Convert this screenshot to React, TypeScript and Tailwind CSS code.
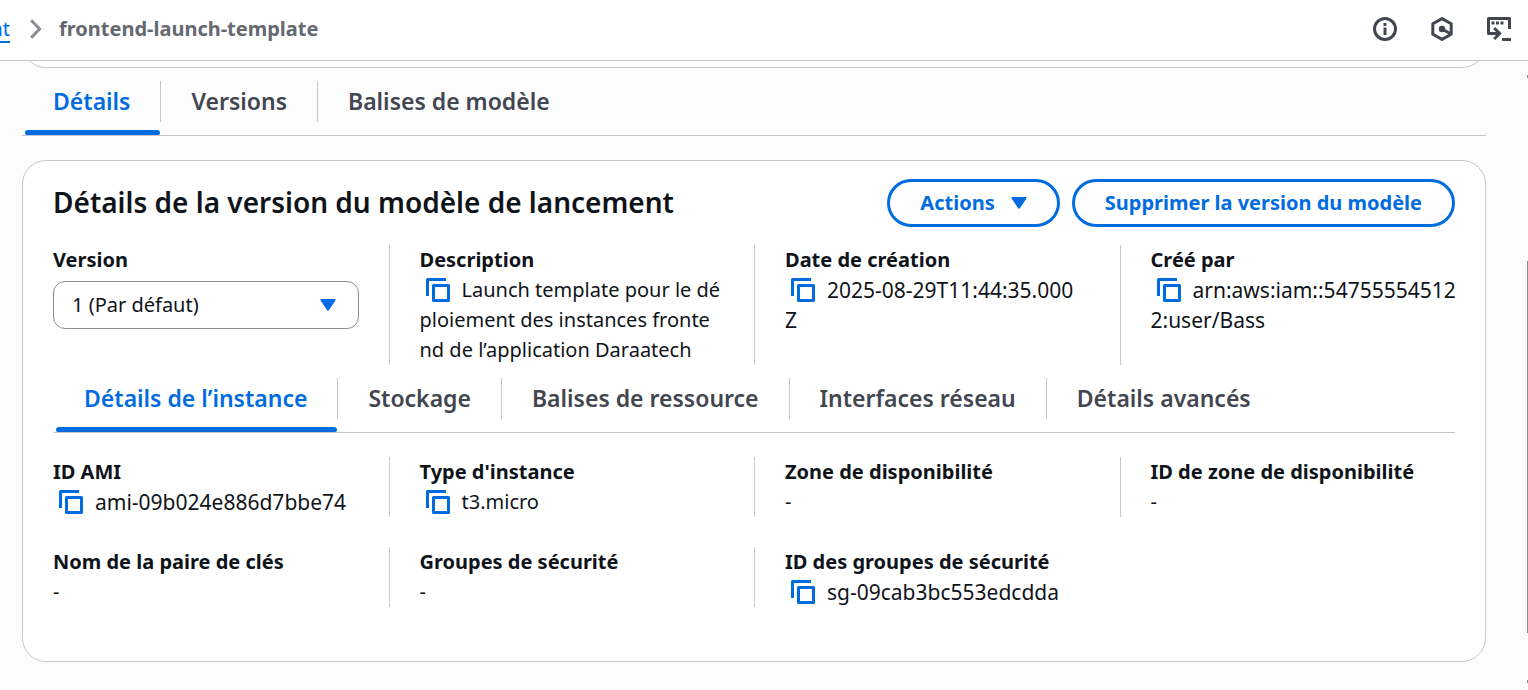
import React, { useState } from "react";

type Field = {
  label: string;
  lines?: string[];
  copy?: boolean;
  code?: boolean;
};

function InfoIcon() {
  return (
    <svg width="24" height="24" viewBox="0 0 24 24" fill="none" stroke="currentColor" strokeWidth="3" aria-hidden="true">
      <circle cx="12" cy="12" r="10.5" />
      <path d="M12 10.5V18" />
      <path d="M12 6v3" />
    </svg>
  );
}

function HexagonIcon() {
  return (
    <svg width="24" height="24" viewBox="0 0 24 24" fill="none" stroke="currentColor" strokeWidth="3" strokeLinejoin="round" aria-hidden="true">
      <path d="M12 1.6 21.2 6.8V17.2L12 22.4 2.8 17.2V6.8Z" />
      <circle cx="12" cy="12" r="3.2" fill="currentColor" stroke="none" />
      <path d="M12 12 21 17" />
    </svg>
  );
}

function ShellIcon() {
  return (
    <svg width="24" height="24" viewBox="0 0 24 24" fill="none" stroke="currentColor" strokeWidth="3" aria-hidden="true">
      <path d="M22.5 12V1.5H1.5V16.5H13" strokeLinejoin="round" />
      <path d="M7.2 11 12.6 16.5 7.2 22" />
      <path d="M15 22.5H24" />
      <path d="M4.5 6H7.5M9 6H12M13.5 6H16.5" />
    </svg>
  );
}

function CopyIcon() {
  return (
    <svg width="24" height="24" viewBox="0 0 24 24" fill="none" stroke="currentColor" strokeWidth="3" strokeLinejoin="round" aria-hidden="true">
      <path d="M1.5 18V1.5H20" />
      <rect x="7.5" y="7.5" width="15" height="15" />
    </svg>
  );
}

function Caret() {
  return (
    <svg width="16" height="12" viewBox="0 0 16 12" fill="currentColor" stroke="currentColor" strokeWidth="2" strokeLinejoin="round" aria-hidden="true">
      <path d="M1.4 1H14.6L8 10.8Z" />
    </svg>
  );
}

function Tabs({ items, label }: { items: string[]; label: string }) {
  const [active, setActive] = useState(0);
  return (
    <div role="tablist" aria-label={label} className="flex border-b border-[#c6c6cd] pl-px">
      {items.map((item, i) => (
        <button
          key={item}
          type="button"
          role="tab"
          aria-selected={i === active}
          onClick={() => setActive(i)}
          className={`relative h-[67px] whitespace-nowrap pr-[31px] pb-[2px] pl-[30px] text-[23px] leading-[30px] font-semibold ${
            i === active ? "text-[#006ce0]" : "text-[#424650]"
          }`}
        >
          {item}
          {i < items.length - 1 && <span className="absolute top-[13px] right-0 h-[41px] w-px bg-[#c6c6cd]" />}
          {i === active && <span className="absolute right-px bottom-0 left-[2px] h-[5px] rounded-t-[3px] rounded-b-[2px] bg-[#006ce0]" />}
        </button>
      ))}
    </div>
  );
}

function Cell({ label, lines = ["-"], copy, code }: Field) {
  return (
    <div className="border-l border-[#c6c6cd] px-[30px] nth-[4n+1]:border-l-0">
      <dt className="font-bold">{label}</dt>
      <dd className={`whitespace-nowrap ${code ? "text-[21px]" : "text-[20px]"}`}>
        {lines.map((line, i) => (
          <span key={line} className="flex h-[30px] items-center">
            {copy && i === 0 && (
              <button type="button" aria-label="Copier" className="mr-3 ml-[6px] text-[#006ce0]">
                <CopyIcon />
              </button>
            )}
            {line}
          </span>
        ))}
      </dd>
    </div>
  );
}

const summary: Field[] = [
  {
    label: "Description",
    lines: ["Launch template pour le dé", "ploiement des instances fronte", "nd de l’application Daraatech"],
    copy: true,
  },
  { label: "Date de création", lines: ["2025-08-29T11:44:35.000", "Z"], copy: true, code: true },
  { label: "Créé par", lines: ["arn:aws:iam::54755554512", "2:user/Bass"], copy: true, code: true },
];

const instance: Field[] = [
  { label: "ID AMI", lines: ["ami-09b024e886d7bbe74"], copy: true, code: true },
  { label: "Type d'instance", lines: ["t3.micro"], copy: true },
  { label: "Zone de disponibilité" },
  { label: "ID de zone de disponibilité" },
  { label: "Nom de la paire de clés" },
  { label: "Groupes de sécurité" },
  { label: "ID des groupes de sécurité", lines: ["sg-09cab3bc553edcdda"], copy: true, code: true },
];

const buttonClass =
  "flex h-12 items-center gap-4 rounded-full border-3 border-[#006ce0] px-[30px] font-bold whitespace-nowrap text-[#006ce0]";

export default function App() {
  return (
    <div className="flex min-h-screen flex-col bg-[#fcfcfd] font-['Noto_Sans',sans-serif] text-[20px] leading-[30px] text-[#0f141a]">
      <header className="flex h-[61px] items-center justify-between border-b border-[#c6c6cd] bg-white pr-[17px] pb-[2px]">
        <nav aria-label="Fil d'Ariane" className="flex items-center">
          <span className="flex w-[10px] justify-end overflow-hidden">
            <a href="#" className="text-[#006ce0] underline decoration-2 underline-offset-[5px]">nt</a>
          </span>
          <svg width="12" height="20" viewBox="0 0 12 20" fill="none" stroke="#8c8c94" strokeWidth="3" className="mr-[17px] ml-5" aria-hidden="true">
            <path d="M1.2 1.2 9.6 10 1.2 18.8" />
          </svg>
          <span aria-current="page" className="font-bold text-[#656871]">frontend-launch-template</span>
        </nav>
        <div className="flex items-center gap-[33px] text-[#424650]">
          <button type="button" aria-label="Informations"><InfoIcon /></button>
          <button type="button" aria-label="Amazon Q"><HexagonIcon /></button>
          <button type="button" aria-label="CloudShell"><ShellIcon /></button>
        </div>
      </header>

      <div className="flex flex-1">
        <main className="min-w-0 flex-1 pr-[41px] pl-[22px]">
          <div className="flex h-[7px] flex-col justify-end overflow-hidden">
            <div className="h-12 shrink-0 rounded-b-3xl border border-[#c6c6cd] bg-white" />
          </div>
          <Tabs label="Modèle de lancement" items={["Détails", "Versions", "Balises de modèle"]} />

          <section className="mt-6 rounded-3xl border border-[#c6c6cd] bg-white px-[30px] pt-[18px] pb-[54px]">
            <div className="flex items-center justify-between">
              <h2 className="pb-[2px] text-[28px] font-semibold">Détails de la version du modèle de lancement</h2>
              <div className="flex gap-3">
                <button type="button" className={buttonClass}>
                  Actions
                  <Caret />
                </button>
                <button type="button" className={buttonClass}>Supprimer la version du modèle</button>
              </div>
            </div>

            <dl className="-mx-[30px] mt-[18px] grid grid-cols-4">
              <div className="px-[30px]">
                <dt className="font-bold">
                  <label htmlFor="version">Version</label>
                </dt>
                <dd className="mt-[6px] grid items-center">
                  <select
                    id="version"
                    className="col-start-1 row-start-1 h-12 w-full appearance-none rounded-xl border border-[#8c8c94] bg-white pl-[18px]"
                  >
                    <option>1 (Par défaut)</option>
                  </select>
                  <span className="pointer-events-none col-start-1 row-start-1 mr-[23px] justify-self-end text-[#006ce0]">
                    <Caret />
                  </span>
                </dd>
              </div>
              {summary.map((field) => (
                <Cell key={field.label} {...field} />
              ))}
            </dl>

            <Tabs
              label="Détails de la version"
              items={["Détails de l’instance", "Stockage", "Balises de ressource", "Interfaces réseau", "Détails avancés"]}
            />

            <dl className="-mx-[30px] mt-6 grid grid-cols-4 gap-y-[30px]">
              {instance.map((field) => (
                <Cell key={field.label} {...field} />
              ))}
            </dl>
          </section>
        </main>

        <div className="flex w-px flex-col items-end justify-between pt-[14px] pb-[7px]" aria-hidden="true">
          <span className="h-[3px] w-px bg-[#8b8b8b]" />
          <span className="mt-[135px] h-[372px] w-px bg-[#8b8b8b]" />
          <span className="h-[3px] w-px bg-[#8b8b8b]" />
        </div>
      </div>
    </div>
  );
}
